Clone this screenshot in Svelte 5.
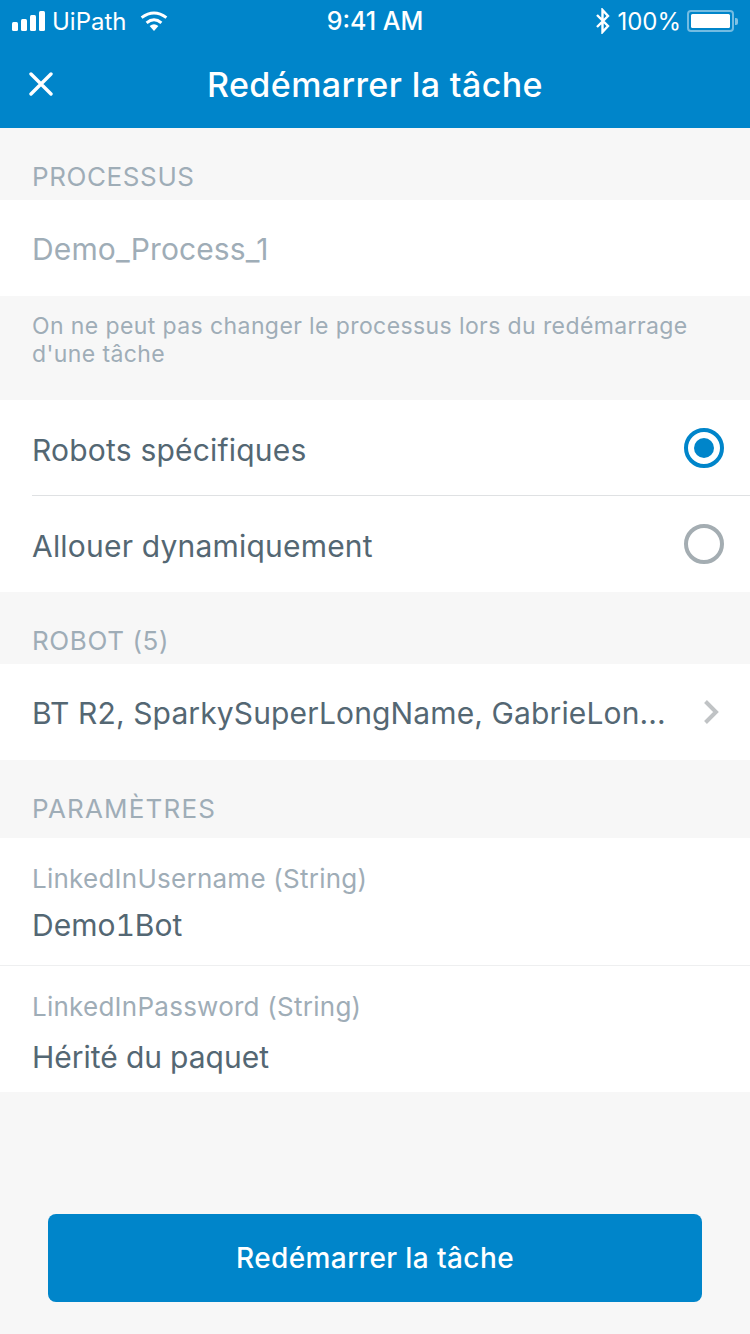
<script>
	const params = [
		{ label: 'LinkedInUsername (String)', value: 'Demo1Bot' },
		{ label: 'LinkedInPassword (String)', value: 'Hérité du paquet' }
	];
</script>

<div class="screen">
	<header class="top">
		<div class="status">
			<div class="status-left">
				<div class="signal"><i></i><i></i><i></i><i></i></div>
				<span class="carrier">UiPath</span>
				<svg class="wifi" viewBox="0 0 28 20" width="28" height="20">
					<path d="M14 20 L9.6 15 Q14 11.6 18.4 15 Z" fill="#fff" />
					<path d="M6.6 11.8 Q14 5.8 21.4 11.8" fill="none" stroke="#fff" stroke-width="3" />
					<path d="M1.6 6.6 Q14 -2.6 26.4 6.6" fill="none" stroke="#fff" stroke-width="3" />
				</svg>
			</div>
			<div class="time">9:41 AM</div>
			<div class="status-right">
				<svg class="bt" viewBox="0 0 16 26" width="16" height="26">
					<path d="M2 7 L13 18 L7.5 24 V2 L13 8 L2 19" fill="none" stroke="#fff" stroke-width="2.4" />
				</svg>
				<span class="pct">100%</span>
				<div class="battery"><div class="battery-fill"></div></div>
				<div class="battery-tip"></div>
			</div>
		</div>
		<div class="nav">
			<svg class="close" viewBox="0 0 24 24" width="24" height="24">
				<path d="M2 2 L22 22 M22 2 L2 22" stroke="#fff" stroke-width="3.4" stroke-linecap="round" />
			</svg>
			<h1>Redémarrer la tâche</h1>
		</div>
	</header>

	<div class="section-label">PROCESSUS</div>
	<div class="row disabled"><span>Demo_Process_1</span></div>
	<p class="help">On ne peut pas changer le processus lors du redémarrage d'une tâche</p>

	<div class="options">
		<div class="option first">
			<span>Robots spécifiques</span>
			<div class="radio on"></div>
		</div>
		<div class="option">
			<span>Allouer dynamiquement</span>
			<div class="radio"></div>
		</div>
	</div>

	<div class="section-label">ROBOT (5)</div>
	<div class="row link">
		<span>BT R2, SparkySuperLongName, GabrieLon...</span>
		<svg class="chevron" viewBox="0 0 16 26" width="16" height="26">
			<path d="M2.5 2.5 L13 13 L2.5 23.5" fill="none" stroke="#c0c3c5" stroke-width="4" />
		</svg>
	</div>

	<div class="section-label tall">PARAMÈTRES</div>
	<div class="params">
		{#each params as p}
			<div class="param">
				<div class="param-label">{p.label}</div>
				<div class="param-value">{p.value}</div>
			</div>
		{/each}
	</div>

	<div class="footer">
		<button class="primary">Redémarrer la tâche</button>
	</div>
</div>

<style>
	:global(body) { margin: 0; background: #f7f7f7; }
	.screen {
		width: 750px; height: 1334px; overflow: hidden;
		display: flex; flex-direction: column;
		background: #f7f7f7;
		font-family: Inter, sans-serif;
		color: #546773;
	}
	.top { background: #0085ca; color: #fff; height: 128px; flex: none; }
	.status {
		height: 42px; margin-bottom: -2px; padding: 0 12px;
		display: grid; grid-template-columns: 1fr auto 1fr; align-items: center;
		font-size: 24px;
	}
	.status-left, .status-right { display: flex; align-items: center; }
	.status-right { justify-content: flex-end; }
	.signal { display: flex; align-items: flex-end; gap: 3px; height: 20px; }
	.signal i { display: block; width: 6px; background: #fff; border-radius: 1.5px; }
	.signal i:nth-child(1) { height: 9px; }
	.signal i:nth-child(2) { height: 12px; }
	.signal i:nth-child(3) { height: 16px; }
	.signal i:nth-child(4) { height: 20px; }
	.carrier { margin-left: 7px; }
	.wifi { margin-left: 13px; }
	.time { font-size: 25px; font-weight: 500; }
	.pct { margin-left: 6px; }
	.battery {
		margin-left: 6px; width: 47px; height: 22px; box-sizing: border-box;
		border: 2px solid rgba(255,255,255,0.45); border-radius: 4px; padding: 2px;
	}
	.battery-fill { width: 100%; height: 100%; background: #fff; border-radius: 1.5px; }
	.battery-tip { width: 3px; height: 7px; margin-left: 1px; background: rgba(255,255,255,0.5); border-radius: 0 2px 2px 0; }
	.nav { height: 88px; position: relative; display: flex; align-items: center; justify-content: center; }
	.close { position: absolute; left: 29px; top: 32px; }
	h1 { margin: 0; font-size: 34px; font-weight: 500; letter-spacing: 0.4px; color: #fff; }
	.section-label {
		height: 72px; flex: none; box-sizing: border-box;
		padding: 32px 32px 0;
		font-size: 26px; line-height: 34px; letter-spacing: 0.6px; color: #9fadb7;
	}
	.section-label.tall { height: 78px; letter-spacing: 1.2px; }
	.row {
		height: 96px; flex: none; box-sizing: border-box;
		background: #fff; padding: 0 31px 0 32px;
		display: flex; align-items: center; justify-content: space-between;
		font-size: 30px; letter-spacing: 0.12px;
	}
	.row span { margin-top: 2px; }
	.disabled { color: #9fadb7; }
	.help {
		height: 104px; flex: none; box-sizing: border-box; margin: 0;
		padding: 16px 32px 0;
		font-size: 23px; line-height: 28px; letter-spacing: 0.4px; color: #9fadb7;
	}
	.options { background: #fff; padding-left: 32px; flex: none; }
	.option {
		height: 96px; box-sizing: border-box; padding-right: 26px;
		display: flex; align-items: center; justify-content: space-between;
		font-size: 30px; letter-spacing: 0.2px;
	}
	.option span { margin-top: 4px; }
	.option.first { border-bottom: 1px solid #dfe1e3; }
	.radio {
		width: 40px; height: 40px; box-sizing: border-box;
		border: 4px solid #a4adb2; border-radius: 50%;
		display: flex; align-items: center; justify-content: center;
	}
	.radio.on { border-color: #0085ca; }
	.radio.on::after { content: ''; width: 20px; height: 20px; border-radius: 50%; background: #0085ca; }
	.params { background: #fff; flex: none; }
	.param { height: 127px; box-sizing: border-box; padding: 24px 32px 0; }
	.param + .param { border-top: 1px solid #eeeff0; }
	.param-label { font-size: 26px; line-height: 34px; letter-spacing: 0.25px; color: #9fadb7; }
	.param-value { font-size: 30px; line-height: 40px; margin-top: 9px; font-variant-numeric: tabular-nums; }
	.param + .param .param-value { margin-top: 13px; }
	.footer { flex: 1; display: flex; align-items: flex-end; padding: 0 48px 32px; }
	.primary {
		width: 100%; height: 88px; border: 0; border-radius: 8px;
		background: #0085ca; color: #fff;
		font-family: inherit; font-size: 28px; font-weight: 500; letter-spacing: 0.4px;
	}
</style>
